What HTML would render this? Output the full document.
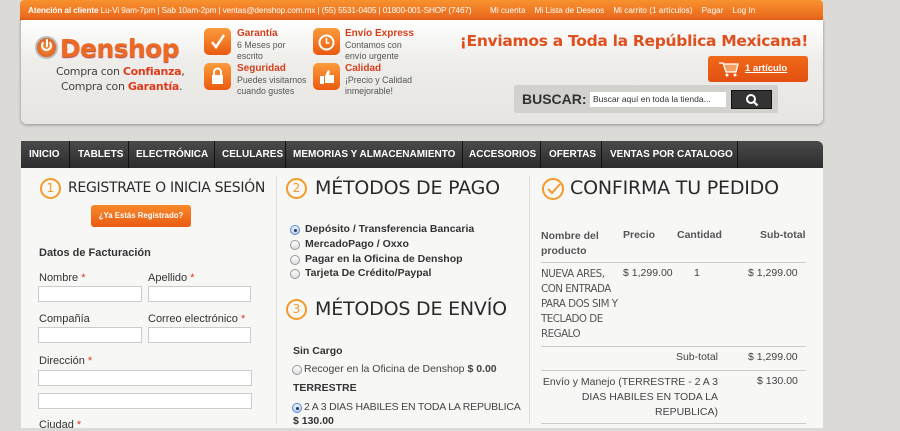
<!DOCTYPE html>
<html><head><meta charset="utf-8"><style>
*{margin:0;padding:0;box-sizing:border-box}
body{width:900px;height:424px;overflow:hidden;background:#dcdad6;font-family:"Liberation Sans",sans-serif;position:relative;color:#333}
.a{position:absolute;white-space:nowrap}
#top{left:20px;top:0;width:803px;height:21px;background:linear-gradient(#f7922e,#e8621a);border-radius:4px 4px 0 0;color:#fff;font-size:8.2px;line-height:21px;padding-left:8px;letter-spacing:-.1px}
#hdr{left:21px;top:20px;width:802px;height:104px;background:linear-gradient(#fff,#eeedea 40%,#e6e5e2);border-radius:0 0 6px 6px;box-shadow:0 1px 3px rgba(0,0,0,.35)}
.ic{position:absolute;width:27px;height:27px;border-radius:5px;background:linear-gradient(#fb9c3c,#ea5a10)}
.t1{font-size:10px;font-weight:bold;color:#d5401c}
.t2{font-size:8.8px;color:#555;line-height:11px}
#nav{left:21px;top:141px;width:802px;height:27px;background:linear-gradient(#4a4a4a,#2c2c2c);border-radius:0 6px 0 0}
.n{position:absolute;top:141px;height:27px;line-height:27px;color:#fff;font-size:10px;font-weight:bold;font-family:"Liberation Sans",sans-serif}
.sep{position:absolute;top:141px;width:1px;height:27px;background:#111}
#main{left:21px;top:168px;width:802px;height:260px;background:#f7f7f6}
.h{font-family:"DejaVu Sans","Liberation Sans",sans-serif;color:#2a2a2a}
.circ{position:absolute;width:21px;height:21px;border:2px solid #f39a2b;border-radius:50%;color:#f39a2b;font-size:12px;text-align:center;line-height:17px;font-family:"DejaVu Sans",sans-serif}
.lab{font-size:11px;color:#333}
.lab i{color:#e03a1a;font-style:normal}
.inp{position:absolute;height:16px;border:1px solid #ccc;background:#fff}
.rad{position:absolute;width:10px;height:10px;border:1px solid #999;border-radius:50%;background:linear-gradient(#fff,#ddd)}
.rad.on::after{content:"";position:absolute;left:2.5px;top:2.5px;width:3px;height:3px;border-radius:50%;background:#335}
.rad.on{border-color:#5b8ac8;background:linear-gradient(#eaf2ff,#b9d0f0)}
.rt{font-size:10.5px;font-weight:bold;color:#333}
.tb{font-size:10.5px;color:#444}
.line{position:absolute;left:541px;width:265px;height:1px;background:#ccc}
</style></head><body>
<div class="a" id="top"><b>Atención al cliente</b> Lu-Vi 9am-7pm | Sab 10am-2pm | ventas@denshop.com.mx | (55) 5531-0405 | 01800-001-SHOP (7467)</div>
<div class="a" style="left:490px;top:0;line-height:21px;font-size:8.2px;color:#fff;word-spacing:0">Mi cuenta&nbsp;&nbsp;&nbsp;&nbsp;Mi Lista de Deseos&nbsp;&nbsp;&nbsp;&nbsp;Mi carrito (1 artículos)&nbsp;&nbsp;&nbsp;&nbsp;Pagar&nbsp;&nbsp;&nbsp;&nbsp;Log In</div>
<div class="a" id="hdr"></div>
<!-- logo -->
<div class="a" style="left:35px;top:36px;width:23px;height:23px;border-radius:50%;background:radial-gradient(#f7923a,#d8501a);border:2px solid #bbb"></div>
<div class="a" style="left:41px;top:40px;width:11px;height:11px;border:2px solid #fff;border-radius:50%;border-top-color:transparent"></div>
<div class="a" style="left:45.5px;top:39px;width:2px;height:8px;background:#fff"></div>
<div class="a" style="left:60px;top:34px;font-size:25px;font-weight:bold;color:#ee6a22;font-family:'DejaVu Sans',sans-serif;letter-spacing:-.6px;text-shadow:0 1px 1px #a44">Denshop</div>
<div class="a" style="left:56px;top:65px;font-size:11px;color:#444;font-family:'DejaVu Sans',sans-serif;letter-spacing:-.3px">Compra con <b style="color:#e03a1a">Confianza</b>,</div>
<div class="a" style="left:61px;top:80px;font-size:11px;color:#444;font-family:'DejaVu Sans',sans-serif;letter-spacing:-.3px">Compra con <b style="color:#e03a1a">Garantía</b>.</div>
<!-- feature icons -->
<div class="ic" style="left:204px;top:28px"><svg width="27" height="27"><path d="M8 14l4 5 8-12" stroke="#fff" stroke-width="2.5" fill="none"/></svg></div>
<div class="ic" style="left:204px;top:63px"><svg width="27" height="27"><rect x="8" y="12" width="11" height="9" fill="#fff"/><path d="M10 12v-3a3.5 3.5 0 0 1 7 0v3" stroke="#fff" stroke-width="2" fill="none"/></svg></div>
<div class="ic" style="left:313px;top:28px"><svg width="27" height="27"><circle cx="13.5" cy="14.5" r="7" stroke="#fff" stroke-width="2" fill="none"/><path d="M13.5 10v5h3" stroke="#fff" stroke-width="1.5" fill="none"/></svg></div>
<div class="ic" style="left:313px;top:63px"><svg width="27" height="27"><rect x="7" y="13" width="4" height="8" fill="#fff"/><path d="M12 13l3-6 2 1-1 4h5v8h-9z" fill="#fff"/></svg></div>
<div class="a t1" style="left:237px;top:28px">Garantía</div>
<div class="a t2" style="left:237px;top:40px">6 Meses por<br>escrito</div>
<div class="a t1" style="left:237px;top:63px">Seguridad</div>
<div class="a t2" style="left:237px;top:75px">Puedes visitarnos<br>cuando gustes</div>
<div class="a t1" style="left:345px;top:28px">Envío Express</div>
<div class="a t2" style="left:345px;top:40px">Contamos con<br>envío urgente</div>
<div class="a t1" style="left:345px;top:63px">Calidad</div>
<div class="a t2" style="left:345px;top:75px">¡Precio y Calidad<br>inmejorable!</div>
<div class="a" style="right:92px;top:32px;font-size:15.5px;font-weight:bold;color:#e0501e;font-family:'DejaVu Sans',sans-serif;letter-spacing:-.3px">¡Enviamos a Toda la República Mexicana!</div>
<div class="a" style="left:708px;top:56px;width:100px;height:26px;background:linear-gradient(#f06a1a,#e35010);border-radius:3px"></div>
<svg class="a" style="left:718px;top:60px" width="22" height="18"><path d="M1 3h4l3 9h10l2-8H6" stroke="#fff" stroke-width="1.3" fill="#f5a060"/><circle cx="9" cy="15" r="1.5" fill="#fff"/><circle cx="17" cy="15" r="1.5" fill="#fff"/></svg>
<div class="a" style="left:745px;top:63px;font-size:9.5px;color:#fff;font-weight:bold;text-decoration:underline">1 artículo</div>
<div class="a" style="left:514px;top:85px;width:264px;height:28px;background:#d2d1ce;border-radius:2px"></div>
<div class="a" style="left:522px;top:91px;font-size:14px;font-weight:bold;color:#333;font-family:'Liberation Sans',sans-serif">BUSCAR:</div>
<div class="a" style="left:590px;top:92px;width:136px;height:15px;background:#fff;font-size:8.5px;line-height:15px;padding-left:3px;color:#333">Buscar aquí en toda la tienda...</div>
<div class="a" style="left:731px;top:90px;width:41px;height:19px;background:#333;border:1px solid #111"></div>
<svg class="a" style="left:745px;top:93px" width="14" height="14"><circle cx="6" cy="6" r="4" stroke="#fff" stroke-width="2" fill="none"/><path d="M9 9l3.5 3.5" stroke="#fff" stroke-width="2.2"/></svg>
<!-- nav -->
<div class="a" id="nav"></div>
<div class="n" style="left:29px">INICIO</div><div class="sep" style="left:69px"></div>
<div class="n" style="left:78px">TABLETS</div><div class="sep" style="left:128px"></div>
<div class="n" style="left:136px">ELECTRÓNICA</div><div class="sep" style="left:214px"></div>
<div class="n" style="left:222px">CELULARES</div><div class="sep" style="left:285px"></div>
<div class="n" style="left:293px">MEMORIAS Y ALMACENAMIENTO</div><div class="sep" style="left:462px"></div>
<div class="n" style="left:469px">ACCESORIOS</div><div class="sep" style="left:540px"></div>
<div class="n" style="left:549px">OFERTAS</div><div class="sep" style="left:601px"></div>
<div class="n" style="left:610px">VENTAS POR CATALOGO</div><div class="sep" style="left:737px"></div>
<!-- main -->
<div class="a" id="main"></div>
<div class="a" style="left:276px;top:176px;width:1px;height:248px;background:#ddd"></div>
<div class="a" style="left:529px;top:176px;width:1px;height:248px;background:#ddd"></div>
<!-- col1 -->
<div class="circ" style="left:40px;top:178px">1</div>
<div class="a h" style="left:68px;top:180px;font-size:14px;letter-spacing:-.3px">REGISTRATE O INICIA SESIÓN</div>
<div class="a" style="left:91px;top:205px;width:100px;height:22px;background:linear-gradient(#f88a2a,#ea5a14);border-radius:3px;color:#fff;font-size:7.8px;font-weight:bold;text-align:center;line-height:22px">¿Ya Estás Registrado?</div>
<div class="a" style="left:39px;top:247px;font-size:11px;font-weight:bold;color:#333">Datos de Facturación</div>
<div class="a lab" style="left:39px;top:272px">Nombre <i>*</i></div>
<div class="a lab" style="left:148px;top:272px">Apellido <i>*</i></div>
<div class="inp" style="left:38px;top:286px;width:104px"></div>
<div class="inp" style="left:148px;top:286px;width:103px"></div>
<div class="a lab" style="left:39px;top:313px">Compañía</div>
<div class="a lab" style="left:148px;top:313px">Correo electrónico <i>*</i></div>
<div class="inp" style="left:38px;top:327px;width:104px"></div>
<div class="inp" style="left:148px;top:327px;width:103px"></div>
<div class="a lab" style="left:39px;top:355px">Dirección <i>*</i></div>
<div class="inp" style="left:38px;top:370px;width:214px"></div>
<div class="inp" style="left:38px;top:393px;width:214px"></div>
<div class="a lab" style="left:39px;top:419px">Ciudad <i>*</i></div>
<!-- col2 -->
<div class="circ" style="left:286px;top:178px">2</div>
<div class="a h" style="left:315px;top:177px;font-size:19px;letter-spacing:-.2px">MÉTODOS DE PAGO</div>
<div class="rad on" style="left:290px;top:225px"></div><div class="a rt" style="left:305px;top:223px">Depósito / Transferencia Bancaria</div>
<div class="rad" style="left:290px;top:240px"></div><div class="a rt" style="left:305px;top:238px">MercadoPago / Oxxo</div>
<div class="rad" style="left:290px;top:255px"></div><div class="a rt" style="left:305px;top:253px">Pagar en la Oficina de Denshop</div>
<div class="rad" style="left:290px;top:269px"></div><div class="a rt" style="left:305px;top:267px">Tarjeta De Crédito/Paypal</div>
<div class="circ" style="left:286px;top:299px">3</div>
<div class="a h" style="left:315px;top:298px;font-size:19px;letter-spacing:-.2px">MÉTODOS DE ENVÍO</div>
<div class="a rt" style="left:293px;top:345px">Sin Cargo</div>
<div class="rad" style="left:292px;top:365px"></div><div class="a tb" style="left:304px;top:363px">Recoger en la Oficina de Denshop <b>$ 0.00</b></div>
<div class="a rt" style="left:293px;top:382px">TERRESTRE</div>
<div class="rad on" style="left:292px;top:403px"></div><div class="a tb" style="left:304px;top:401px;letter-spacing:-.2px">2 A 3 DIAS HABILES EN TODA LA REPUBLICA</div>
<div class="a rt" style="left:293px;top:415px">$ 130.00</div>
<!-- col3 -->
<div class="a" style="left:542px;top:178px;width:22px;height:22px;border:2px solid #f39a2b;border-radius:50%"></div>
<svg class="a" style="left:546px;top:182px" width="16" height="14"><path d="M2 7l4 4 8-9" stroke="#f39a2b" stroke-width="2" fill="none"/></svg>
<div class="a h" style="left:570px;top:177px;font-size:19px;letter-spacing:-.2px">CONFIRMA TU PEDIDO</div>
<div class="a" style="left:541px;top:229px;font-size:10.5px;font-weight:bold;color:#555;line-height:15px">Nombre del<br>producto</div>
<div class="a" style="left:623px;top:229px;font-size:10.5px;font-weight:bold;color:#555">Precio</div>
<div class="a" style="left:677px;top:229px;font-size:10.5px;font-weight:bold;color:#555">Cantidad</div>
<div class="a" style="left:760px;top:229px;font-size:10.5px;font-weight:bold;color:#555">Sub-total</div>
<div class="line" style="top:262px"></div>
<div class="a" style="left:541px;top:267px;font-size:10.3px;color:#555;line-height:15px;font-family:'DejaVu Sans',sans-serif;letter-spacing:-.5px">NUEVA ARES,<br>CON ENTRADA<br>PARA DOS SIM Y<br>TECLADO DE<br>REGALO</div>
<div class="a tb" style="left:623px;top:267px">$ 1,299.00</div>
<div class="a tb" style="left:694px;top:267px">1</div>
<div class="a tb" style="left:748px;top:267px">$ 1,299.00</div>
<div class="line" style="top:346px"></div>
<div class="a tb" style="right:182px;top:351px">Sub-total</div>
<div class="a tb" style="left:748px;top:351px">$ 1,299.00</div>
<div class="line" style="top:370px"></div>
<div class="a tb" style="right:182px;top:375px;text-align:right;line-height:15px">Envío y Manejo (TERRESTRE - 2 A 3<br>DIAS HABILES EN TODA LA<br>REPUBLICA)</div>
<div class="a tb" style="left:757px;top:375px">$ 130.00</div>
<div class="line" style="top:423px"></div>
</body></html>
